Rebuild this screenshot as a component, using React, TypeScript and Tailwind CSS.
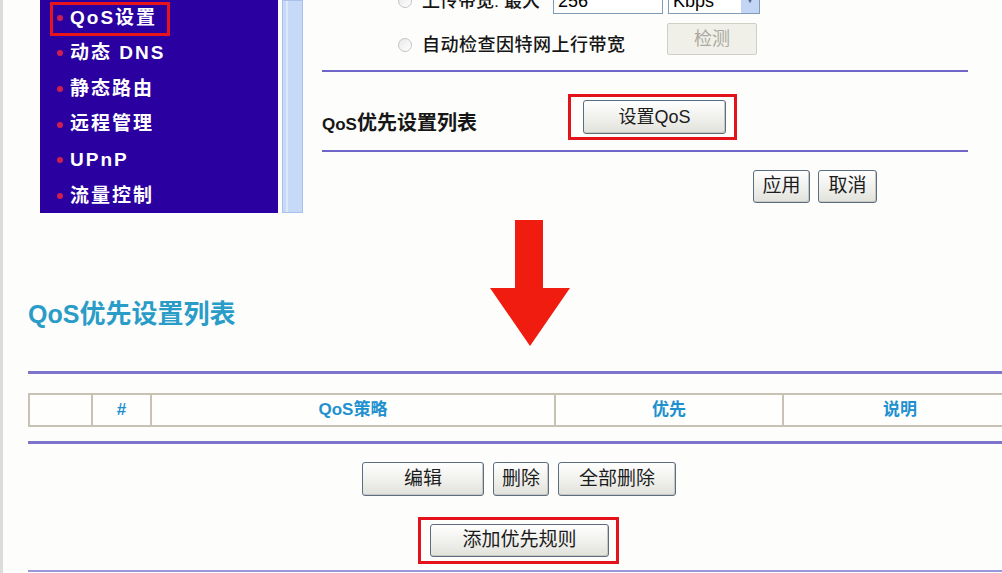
import React from "react";

const font = "font-['Liberation_Sans','Noto_Sans_CJK_SC',sans-serif]";

const menu = ["QoS设置", "动态 DNS", "静态路由", "远程管理", "UPnP", "流量控制"];

function Btn({ children, className = "" }: { children: React.ReactNode; className?: string }) {
    return (
        <div className={`flex items-center justify-center rounded-[3px] border border-[#5b6d7e] bg-gradient-to-b from-white to-[#e2e2dc] text-[#1c1c1c] shadow-[inset_-1px_-1px_0_#c8c8c0] ${className}`}>
            {children}
        </div>
    );
}

function Radio() {
    return <div className="h-[14px] w-[14px] rounded-full border border-[#c4c4c4] bg-gradient-to-br from-[#e8e8e8] to-white" />;
}

function Arrow() {
    return (
        <svg width="100" height="140" viewBox="0 0 100 140" className="mt-[3px]">
            <polygon points="35,2 63,2 63,70 90,70 50,128 10,70 35,70" fill="#f01c10" />
        </svg>
    );
}

export default function App() {
    return (
        <div className={`${font} w-[1002px] h-[573px] overflow-hidden bg-[#fdfdfb] border-l-[3px] border-l-[#dcdcdc]`}>
            {/* top part: menu + settings */}
            <div className="flex h-[215px]">
                <div className="ml-[37px] h-[213px] w-[238px] bg-[#2a00a0]">
                    {menu.map((m, i) => (
                        <div key={m} className="relative flex h-[35.6px] items-center pl-[17px]">
                            <div className="h-[6px] w-[6px] rounded-full bg-[#d01e4e]" />
                            <span className="ml-[7px] text-[19px] font-bold tracking-[2px] text-white">{m}</span>
                            {i === 0 && (
                                <div className="absolute left-[10px] top-[2px] h-[34px] w-[120px] border-[3px] border-[#e8141c]" />
                            )}
                        </div>
                    ))}
                </div>
                <div className="ml-[4px] flex h-[213px] w-[21px] border border-[#a9c1ea] bg-[#c6d9f7]">
                    <div className="ml-[3px] h-full w-[2px] bg-[#dde8fb]" />
                </div>

                <div className="ml-[19px] flex w-[646px] flex-col">
                    <div className="-mt-[12px] flex h-[26px] items-center">
                        <div className="ml-[76px]"><Radio /></div>
                        <span className="ml-[10px] w-[131px] text-[18px] font-medium text-[#161616]">上传带宽: 最大</span>
                        <div className="flex h-[26px] w-[110px] items-center border border-[#7f9db9] bg-white pl-[4px] text-[18px]">256</div>
                        <div className="ml-[5px] flex h-[26px] w-[92px] items-center border border-[#7f9db9] bg-white pl-[4px] text-[18px]">
                            <span className="flex-1">Kbps</span>
                            <div className="flex h-full w-[18px] items-center justify-center bg-[#c3d5f5] text-[9px] text-[#4d6185]">▼</div>
                        </div>
                    </div>
                    <div className="mt-[9px] flex h-[32px] items-start">
                        <div className="ml-[76px] mt-[12px] flex h-[20px] items-center">
                            <Radio />
                            <span className="ml-[10px] w-[245px] text-[18px] font-medium tracking-[0.5px] text-[#161616]">自动检查因特网上行带宽</span>
                        </div>
                        <div className="flex h-[32px] w-[90px] items-center justify-center rounded-[2px] border border-[#cfcfc4] bg-[#f1f0e8] text-[18px] text-[#a8a8a0]">检测</div>
                    </div>
                    <div className="mt-[15px] h-[2px] bg-[#6f66c8]" />
                    <div className="flex h-[78px] items-start">
                        <div className="mt-[41px] w-[246px] text-[20px] font-bold leading-[20px] text-[#161616]">
                            <span className="text-[17px]">QoS</span>优先设置列表
                        </div>
                        <div className="mt-[22px] border-[3px] border-[#e4121a] py-[3px] pl-[12px] pr-[8px]">
                            <Btn className="h-[34px] w-[143px] text-[18px]">设置QoS</Btn>
                        </div>
                    </div>
                    <div className="h-[2px] bg-[#6f66c8]" />
                    <div className="ml-[431px] mt-[18px] flex gap-[8px]">
                        <Btn className="h-[33px] w-[57px] text-[19px]">应用</Btn>
                        <Btn className="h-[33px] w-[59px] text-[19px]">取消</Btn>
                    </div>
                </div>
            </div>

            {/* lower part: QoS list */}
            <div className="flex h-[150px] items-start">
                <div className="w-[477px] pl-[25px] pt-[87px] text-[26px] font-bold leading-[24px] text-[#2a9cc8]">
                    <span className="text-[25px]">QoS</span>优先设置列表
                </div>
                <Arrow />
            </div>
            <div className="ml-[25px] mt-[6px] h-[3px] bg-[#7d74cc]" />
            <div className="ml-[25px] mt-[19px] grid h-[34px] w-[990px] grid-cols-[61px_59px_404px_228px_1fr] border-2 border-[#c8c2b4] bg-[#fefefc] text-[17px] font-bold text-[#2190cf]">
                <div />
                <div className="flex items-center justify-center border-l-2 border-[#c8c2b4]">#</div>
                <div className="flex items-center justify-center border-l-2 border-[#c8c2b4]">QoS策略</div>
                <div className="flex items-center justify-center border-l-2 border-[#c8c2b4]">优先</div>
                <div className="flex items-center justify-center border-l-2 border-[#c8c2b4]">说明</div>
            </div>
            <div className="ml-[25px] mt-[14px] h-[3px] bg-[#7d74cc]" />
            <div className="ml-[359px] mt-[18px] flex gap-[9px]">
                <Btn className="h-[34px] w-[122px] text-[19px]">编辑</Btn>
                <Btn className="h-[34px] w-[56px] text-[19px]">删除</Btn>
                <Btn className="h-[34px] w-[118px] text-[19px]">全部删除</Btn>
            </div>
            <div className="ml-[415px] mt-[21px] w-fit border-[3px] border-[#e4121a] py-[4px] pl-[9px] pr-[7px]">
                <Btn className="h-[33px] w-[179px] text-[19px]">添加优先规则</Btn>
            </div>
            <div className="ml-[25px] mt-[6px] h-[2px] bg-[#9c96dc]" />
        </div>
    );
}
